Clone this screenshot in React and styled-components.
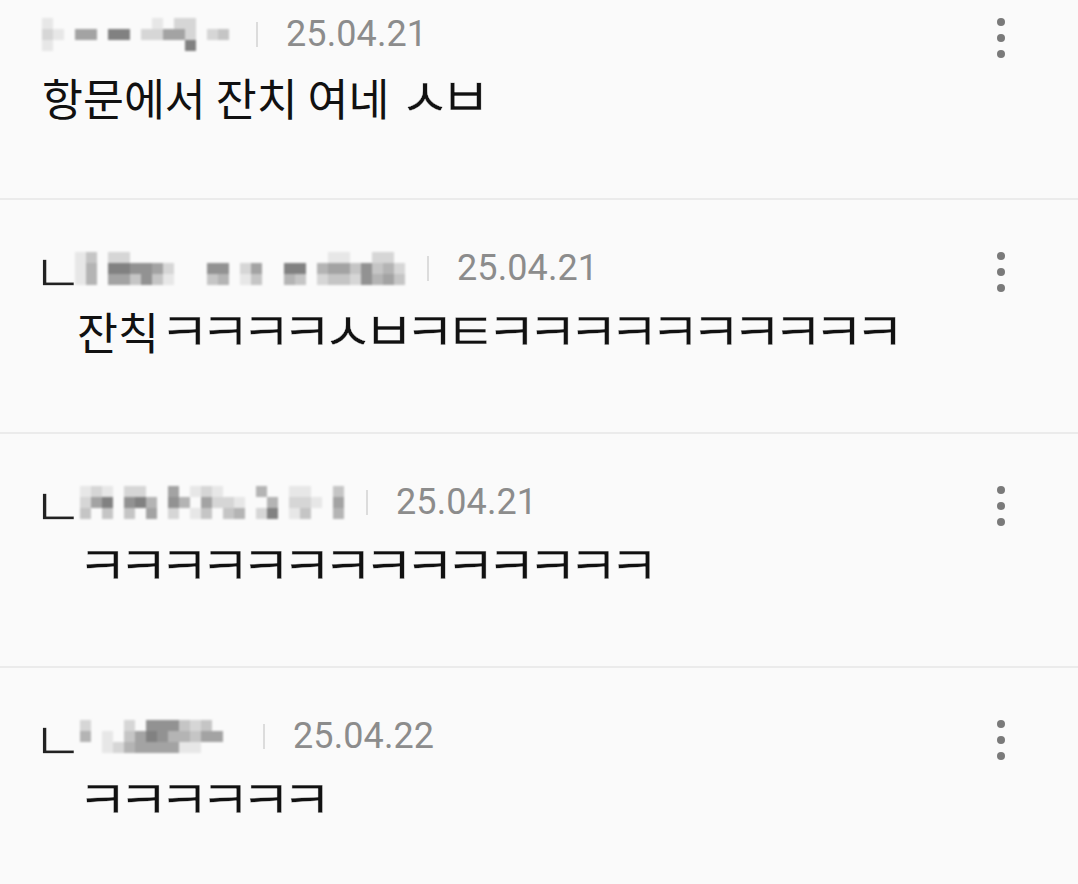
import React from "react";
import styled, { createGlobalStyle } from "styled-components";

const Global = createGlobalStyle`
  html, body { margin: 0; padding: 0; background: #fafafa; }
  body { font-family: "Noto Sans CJK KR", "Noto Sans", sans-serif; overflow: hidden; }
`;

const List = styled.div`
  display: flex;
  flex-direction: column;
  background: #fafafa;
  width: 1078px;
  height: 884px;
  overflow: hidden;
`;

const Item = styled.div`
  display: flex;
  align-items: flex-start;
  padding: ${(p) => (p.$first ? "14px" : "48px")} 73px 76px 42px;
  border-bottom: 2px solid #ebebeb;
  flex-shrink: 0;
`;

const Main = styled.div`
  flex: 1;
  display: flex;
  flex-direction: column;
  gap: 12px;
`;

const Meta = styled.div`
  display: flex;
  align-items: center;
  height: 40px;
`;

const ReplyMark = styled.span`
  font-family: "Noto Sans CJK KR", sans-serif;
  font-size: 56px;
  line-height: 40px;
  height: 40px;
  color: #222;
  -webkit-text-stroke: 1.2px #fafafa;
  width: ${(p) => p.$w}px;
  margin-left: -10px;
  flex-shrink: 0;
  position: relative;
  top: 1px;
`;

const Mosaic = styled.div`
  display: flex;
  flex-direction: column;
  filter: blur(0.8px);
`;

const MosaicRow = styled.div`
  display: flex;
`;

const Cell = styled.span`
  width: 11px;
  height: 11px;
  background: ${(p) => p.$c};
`;

const Sep = styled.span`
  width: 2px;
  height: 25px;
  background: #dcdcdc;
  margin: 0 ${(p) => p.$after}px 0 ${(p) => p.$before}px;
  flex-shrink: 0;
`;

const DateText = styled.span`
  font-family: Roboto, "Liberation Sans", sans-serif;
  font-size: 36px;
  line-height: 40px;
  color: #8c8c8c;
  letter-spacing: 0.1px;
`;

const Body = styled.div`
  font-family: "Noto Sans CJK KR", sans-serif;
  font-size: 44.5px;
  line-height: 56px;
  height: 56px;
  color: #111;
  white-space: nowrap;
  margin-left: ${(p) => (p.$reply ? 35 : 0)}px;
`;

const Jamo = styled.span`
  font-size: 55px;
  line-height: 1;
  letter-spacing: -9.7px;
  vertical-align: -1px;
  -webkit-text-stroke: 0.4px #fafafa;
`;

const More = styled.div`
  display: flex;
  flex-direction: column;
  gap: 8px;
  margin-top: 4px;
  width: 8px;
`;

const Dot = styled.span`
  width: 8px;
  height: 8px;
  border-radius: 50%;
  background: #7a7a7a;
`;

const shade = (d) => {
  if (d === "0") return "transparent";
  const v = Math.round(248 - Number(d) * 17);
  return `rgb(${v},${v},${v})`;
};

function Name({ rows }) {
  return (
    <Mosaic>
      {rows.map((r, i) => (
        <MosaicRow key={i}>
          {r.split("").map((d, j) => (
            <Cell key={j} $c={shade(d)} />
          ))}
        </MosaicRow>
      ))}
    </Mosaic>
  );
}

const isJamo = (ch) => {
  const c = ch.charCodeAt(0);
  return c >= 0x3131 && c <= 0x318e;
};

function Text({ value }) {
  const parts = [];
  let buf = "";
  let mode = null;
  for (const ch of value) {
    const j = isJamo(ch);
    if (mode !== null && j !== mode) {
      parts.push({ j: mode, s: buf });
      buf = "";
    }
    mode = j;
    buf += ch;
  }
  if (buf) parts.push({ j: mode, s: buf });
  return parts.map((p, i) =>
    p.j ? <Jamo key={i}>{p.s}</Jamo> : <React.Fragment key={i}>{p.s}</React.Fragment>
  );
}

const comments = [
  {
    first: true,
    name: [
      "1000000000102200000",
      "2105507702255202300",
      "1000000000000700000",
    ],
    sepBefore: 5,
    date: "25.04.21",
    text: "항문에서 잔치 여네 ㅅㅂ",
  },
  {
    reply: true,
    mark: 43,
    name: [
      "130220000000000000000001100220",
      "140776652000660250077045536342",
      "140553631000340130043023326453",
    ],
    sepBefore: 22,
    date: "25.04.21",
    text: "잔칙ㅋㅋㅋㅋㅅㅂㅋㅌㅋㅋㅋㅋㅋㅋㅋㅋㅋㅋ",
  },
  {
    reply: true,
    mark: 48,
    name: [
      "121022005012100040011003",
      "257067406405221004022105",
      "303030502013034027013004",
    ],
    sepBefore: 22,
    date: "25.04.21",
    text: "ㅋㅋㅋㅋㅋㅋㅋㅋㅋㅋㅋㅋㅋㅋ",
  },
  {
    reply: true,
    mark: 48,
    name: [
      "200020666323000",
      "401035764435500",
      "001245555110000",
    ],
    sepBefore: 18,
    date: "25.04.22",
    text: "ㅋㅋㅋㅋㅋㅋ",
  },
];

export default function App() {
  return (
    <>
      <Global />
      <List>
        {comments.map((c, i) => (
          <Item key={i} $first={c.first}>
            <Main>
              <Meta>
                {c.reply && <ReplyMark $w={c.mark}>ㄴ</ReplyMark>}
                <Name rows={c.name} />
                <Sep $before={c.sepBefore} $after={28} />
                <DateText>{c.date}</DateText>
              </Meta>
              <Body $reply={c.reply}>
                <Text value={c.text} />
              </Body>
            </Main>
            <More>
              <Dot />
              <Dot />
              <Dot />
            </More>
          </Item>
        ))}
      </List>
    </>
  );
}
